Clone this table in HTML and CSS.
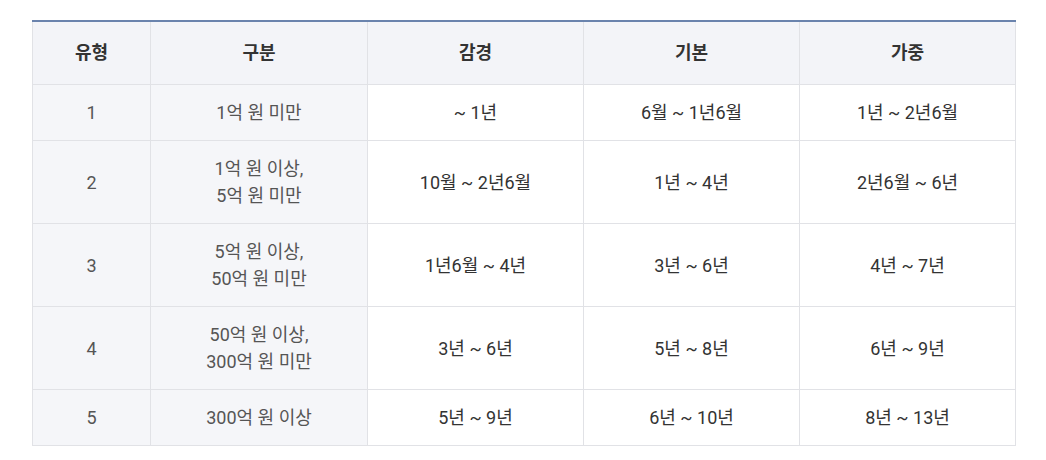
FILE: index.html
```html
<!DOCTYPE html>
<html lang="ko">
<head>
<meta charset="utf-8">
<link rel="stylesheet" href="styles.css">
</head>
<body>
<table class="tbl">
  <colgroup>
    <col class="c1"><col class="c2"><col class="c3"><col class="c3"><col class="c3">
  </colgroup>
  <thead>
    <tr><th>유형</th><th>구분</th><th>감경</th><th>기본</th><th>가중</th></tr>
  </thead>
  <tbody>
    <tr><td class="g">1</td><td class="g">1억 원 미만</td><td>~ 1년</td><td>6월 ~ 1년6월</td><td>1년 ~ 2년6월</td></tr>
    <tr><td class="g">2</td><td class="g">1억 원 이상,<br>5억 원 미만</td><td>10월 ~ 2년6월</td><td>1년 ~ 4년</td><td>2년6월 ~ 6년</td></tr>
    <tr><td class="g">3</td><td class="g">5억 원 이상,<br>50억 원 미만</td><td>1년6월 ~ 4년</td><td>3년 ~ 6년</td><td>4년 ~ 7년</td></tr>
    <tr><td class="g">4</td><td class="g">50억 원 이상,<br>300억 원 미만</td><td>3년 ~ 6년</td><td>5년 ~ 8년</td><td>6년 ~ 9년</td></tr>
    <tr><td class="g">5</td><td class="g">300억 원 이상</td><td>5년 ~ 9년</td><td>6년 ~ 10년</td><td>8년 ~ 13년</td></tr>
  </tbody>
</table>
</body>
</html>
```
FILE: styles.css
```css
html, body {
  margin: 0;
  padding: 0;
  background: #ffffff;
}
body {
  padding: 20px 0 0 32px;
  font-family: Roboto, "Noto Sans CJK KR", sans-serif;
}
.tbl {
  border-collapse: collapse;
  table-layout: fixed;
  width: 983px;
  border-top: 2px solid #6a83ad;
  font-size: 18px;
}
.c1 { width: 118px; }
.c2 { width: 217px; }
.c3 { width: 216px; }
.tbl th, .tbl td {
  border: 1px solid #e1e2e6;
  text-align: center;
  line-height: 27px;
  padding: 14px 4px 14px;
  color: #333;
  font-weight: 400;
}
.tbl th {
  background: #f3f4f8;
  font-weight: 700;
  color: #333;
  padding: 17px 4px 18px;
  border-top: none;
}
.tbl td.g {
  background: #f5f6f9;
  color: #555;
}
```
